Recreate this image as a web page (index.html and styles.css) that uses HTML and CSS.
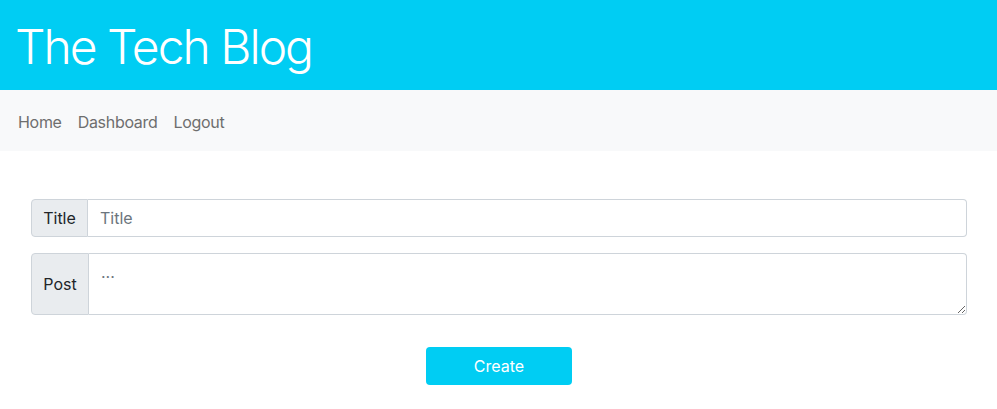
FILE: index.html
```html
<!DOCTYPE html>
<html lang="en">
<head>
<meta charset="utf-8">
<title>The Tech Blog</title>
<link rel="stylesheet" href="styles.css">
</head>
<body>
<header class="hero">
  <h1 class="brand">The Tech Blog</h1>
</header>
<nav class="navbar">
  <a class="nav-link" href="#">Home</a>
  <a class="nav-link" href="#">Dashboard</a>
  <a class="nav-link" href="#">Logout</a>
</nav>
<main class="content">
  <form class="post-form">
    <div class="input-group">
      <span class="group-label">Title</span>
      <input class="control" type="text" placeholder="Title">
    </div>
    <div class="input-group tall">
      <span class="group-label label-post">Post</span>
      <textarea class="control area" placeholder="..."></textarea>
    </div>
    <div class="actions">
      <button class="btn" type="button">Create</button>
    </div>
  </form>
</main>
</body>
</html>
```
FILE: styles.css
```css
* { box-sizing: border-box; }
body {
  margin: 0;
  font-family: Inter, "Noto Sans", "Liberation Sans", sans-serif;
  font-size: 16px;
  color: #212529;
  background: #fff;
}
.hero {
  background: #00cdf3;
  height: 90px;
  display: flex;
  align-items: center;
  padding-left: 15px;
}
.brand {
  margin: 0;
  color: #fff;
  font-size: 48px;
  font-weight: 300;
  letter-spacing: -2px;
  line-height: 1;
  position: relative;
  top: 2px;
}
.navbar {
  background: #f8f9fa;
  height: 61px;
  display: flex;
  align-items: center;
  padding-left: 10px;
  padding-top: 3px;
}
.nav-link {
  color: #6e6e6e;
  text-decoration: none;
  padding: 8px;
  font-size: 16px;
  letter-spacing: -0.3px;
}
.content {
  padding: 48px 30px 0 31px;
}
.input-group {
  display: flex;
  height: 38px;
  margin-bottom: 16px;
}
.input-group.tall { height: 62px; }
.group-label {
  display: flex;
  align-items: center;
  justify-content: center;
  width: 57px;
  background: #e9ecef;
  border: 1px solid #ced4da;
  border-radius: 4px 0 0 4px;
  color: #212529;
  font-size: 16px;
}
.label-post { width: 58px; }
.control {
  flex: 1;
  border: 1px solid #ced4da;
  border-left: none;
  border-radius: 0 4px 4px 0;
  padding: 6px 12px;
  font: inherit;
  font-size: 16px;
  color: #212529;
  outline: none;
}
.control::placeholder { color: #6c757d; }
.area { resize: vertical; padding-top: 8px; }
.actions {
  display: flex;
  justify-content: center;
  padding-top: 16px;
}
.btn {
  width: 146px;
  height: 38px;
  background: #00cdf3;
  border: none;
  border-radius: 4px;
  color: #fff;
  font: inherit;
  font-size: 16px;
}
```
